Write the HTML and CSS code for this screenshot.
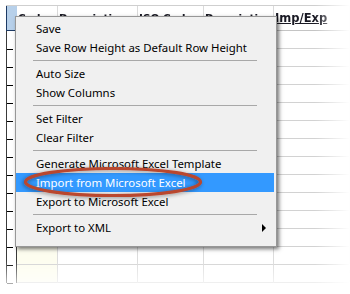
FILE: index.html
```html
<!DOCTYPE html>
<html lang="en">
<head>
    <meta charset="UTF-8">
    <title>Grid context menu</title>
    <link rel="stylesheet" href="styles.css">
</head>
<body>
    <div class="sheet">
        <div class="fade-x">
            <div class="fade-y">
                <div class="grid">
                    <div class="corner"></div>
                    <div class="hd">Code</div>
                    <div class="hd">Description</div>
                    <div class="hd">ISO Code</div>
                    <div class="hd">Description</div>
                    <div class="hd last">Imp/Exp</div>
                </div>
            </div>
        </div>

        <div class="menu">
            <div class="item">Save</div>
            <div class="item">Save Row Height as Default Row Height</div>
            <div class="sep"></div>
            <div class="item">Auto Size</div>
            <div class="item">Show Columns</div>
            <div class="sep"></div>
            <div class="item">Set Filter</div>
            <div class="item">Clear Filter</div>
            <div class="sep"></div>
            <div class="item">Generate Microsoft Excel Template</div>
            <div class="item active">Import from Microsoft Excel</div>
            <div class="item">Export to Microsoft Excel</div>
            <div class="sep"></div>
            <div class="item sub">Export to XML <span class="arrow"></span></div>
        </div>

        <svg class="oval" width="350" height="294" viewBox="0 0 350 294">
            <defs>
                <filter id="glow" x="-10%" y="-60%" width="120%" height="220%">
                    <feDropShadow dx="-1" dy="1" stdDeviation="2" flood-color="#000" flood-opacity="0.45"/>
                </filter>
            </defs>
            <ellipse cx="113" cy="182" rx="87.5" ry="13.5" fill="none" stroke="#b9472e" stroke-width="3.2" filter="url(#glow)"/>
        </svg>
    </div>

    <script>
        // fill the grid with empty rows
        const grid = document.querySelector('.grid');
        for (let r = 0; r < 14; r++) {
            let row = '<div class="rh"></div><div class="c code"></div>';
            for (let c = 0; c < 4; c++) row += '<div class="c"></div>';
            grid.insertAdjacentHTML('beforeend', row);
        }
    </script>
</body>
</html>
```

FILE: styles.css
```css
body {
    margin: 0;
    background: #fff;
    font-family: "Noto Sans", "Open Sans", sans-serif;
}

.sheet {
    position: relative;
    width: 350px;
    height: 294px;
    overflow: hidden;
}

.fade-x {
    -webkit-mask-image: linear-gradient(to right, #000 90%, transparent 100%);
    mask-image: linear-gradient(to right, #000 90%, transparent 100%);
}

.fade-y {
    -webkit-mask-image: linear-gradient(to bottom, #000 88%, transparent 100%);
    mask-image: linear-gradient(to bottom, #000 88%, transparent 100%);
}

.grid {
    display: grid;
    grid-template-columns: 11px 41px 80px 66px 70px 1fr;
    grid-template-rows: 25px;
    grid-auto-rows: 18px;
    margin: 5px 0 0 6px;
    border-top: 1px solid #cfcfcf;
    height: 289px;
}

.grid > div {
    box-sizing: border-box;
}

.corner {
    background: #b7d0ea;
    border-left: 1px solid #1d3a64;
    border-bottom: 1px solid #1d3a64;
}

.hd {
    border-right: 1px solid #dadada;
    border-bottom: 1px solid #c4c4c4;
    padding: 6px 0 0 1px;
    font: bold 10.5px "DejaVu Sans", sans-serif;
    color: #1a1a24;
    text-decoration: underline;
    white-space: nowrap;
}

.hd.last {
    padding-top: 5px;
    font-size: 11.5px;
}

.rh {
    position: relative;
    border-left: 1px solid #3a3a3a;
    border-right: 1px solid #3a3a3a;
}

.rh::after {
    content: "";
    position: absolute;
    left: 0;
    bottom: -1px;
    width: 6px;
    height: 1px;
    background: #000;
}

.c {
    border-right: 1px solid #dcdcdc;
    border-bottom: 1px solid #d2d2d2;
}

.code {
    background: #fdfdef;
}

.menu {
    position: absolute;
    left: 15px;
    top: 16px;
    width: 262px;
    height: 231px;
    box-sizing: border-box;
    padding: 2px 2px 0 0;
    background: #f0f0f0;
    border: 1px solid #979797;
    box-shadow: 2px 2px 4px rgba(0, 0, 0, 0.55);
    font-size: 11.4px;
    color: #000;
}

.item {
    display: flex;
    align-items: center;
    height: 19px;
    padding: 0 8px 0 20px;
    white-space: nowrap;
}

.item.active {
    background: #3399ff;
    color: #fff;
}

.arrow {
    margin-left: auto;
    width: 0;
    height: 0;
    border-left: 4px solid #000;
    border-top: 4px solid transparent;
    border-bottom: 4px solid transparent;
}

.sep {
    height: 7px;
    margin: 0 17px 0 17px;
    background: linear-gradient(#a8a8a8, #a8a8a8) 0 3px / 100% 1px no-repeat;
}

.oval {
    position: absolute;
    left: 0;
    top: 0;
    pointer-events: none;
}
```
